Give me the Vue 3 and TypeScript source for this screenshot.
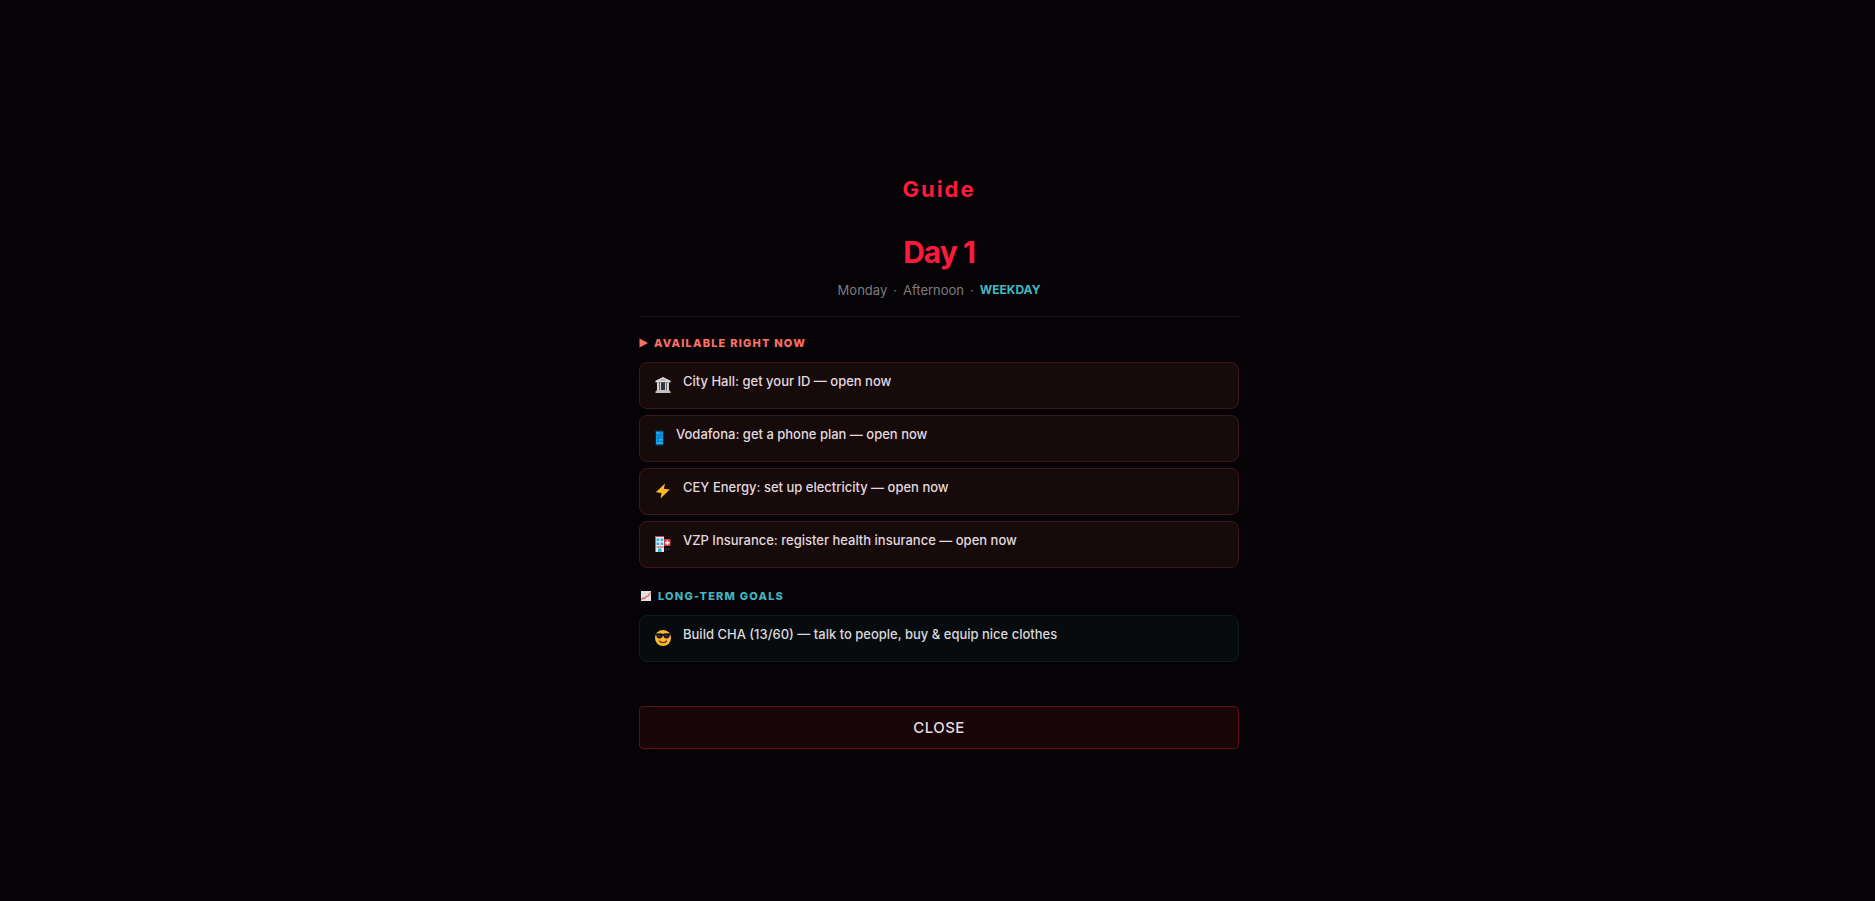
<script setup lang="ts">
import { ref } from 'vue'

type IconName = 'hall' | 'phone' | 'bolt' | 'hospital' | 'shades'

interface Task {
  icon: IconName
  text: string
}

const open = ref(true)

const available: Task[] = [
  { icon: 'hall', text: 'City Hall: get your ID — open now' },
  { icon: 'phone', text: 'Vodafona: get a phone plan — open now' },
  { icon: 'bolt', text: 'CEY Energy: set up electricity — open now' },
  { icon: 'hospital', text: 'VZP Insurance: register health insurance — open now' },
]

const goals: Task[] = [
  { icon: 'shades', text: 'Build CHA (13/60) — talk to people, buy & equip nice clothes' },
]

const groups = [
  { id: 'now', title: 'Available right now', tasks: available },
  { id: 'goals', title: 'Long-term goals', tasks: goals },
]
</script>

<template>
  <main class="page">
    <section v-if="open" class="guide">
      <h1 class="title">Guide</h1>
      <header class="day">
        <h2 class="day-name">Day 1</h2>
        <p class="meta">
          <span>Monday</span><span>·</span><span>Afternoon</span><span>·</span><strong>WEEKDAY</strong>
        </p>
      </header>

      <section v-for="group in groups" :key="group.id" class="group" :class="group.id">
        <h3 class="group-title">
          <svg v-if="group.id === 'now'" class="mark" viewBox="0 0 9 10" width="9" height="10" aria-hidden="true">
            <path d="M.5.5 9 5 .5 9.5z" fill="currentColor" />
          </svg>
          <svg v-else class="mark chart" viewBox="0 0 10 10" width="10" height="10" aria-hidden="true">
            <rect width="10" height="10" fill="#e8e6e8" />
            <path d="M2.5 0v10M5 0v10M7.5 0v10M0 2.5h10M0 5h10M0 7.5h10" stroke="#c9d3d6" stroke-width=".4" />
            <path d="M.3 9 2.3 6.800 3.700 7.600 5.600 5 7 5.200 9.700 1.300" fill="none" stroke="#f0524a" stroke-width="1.100" />
          </svg>
          {{ group.title }}
        </h3>
        <ul class="tasks">
          <li v-for="task in group.tasks" :key="task.text" class="task">
            <span class="icon" :class="task.icon">
              <svg v-if="task.icon === 'hall'" viewBox="0 0 16 16" width="16" height="16" aria-hidden="true">
                <path d="M8 0 15.500 3.800V5.500H.5V3.800z" fill="#dedcdd" />
                <path d="M2 5.500h12V13H2z" fill="#6a6668" />
                <path d="M5 5.500h6V13H5z" fill="#37333a" />
                <path d="M2 5.500h2V13H2zM5 5.500h1V13H5zM10 5.500h1V13h-1zM12 5.500h2V13h-2z" fill="#d4d1d2" />
                <path d="M1.500 13h13v1.200h-13zM.5 14.200h15V16H.5z" fill="#c4c1c3" />
                <path d="M3.500 3.800 8 1.600l4.500 2.200z" fill="#b4b0b3" />
              </svg>
              <svg v-else-if="task.icon === 'phone'" viewBox="0 0 9 16" width="9" height="16" aria-hidden="true">
                <rect width="9" height="16" rx="1" fill="#1b2229" />
                <rect x="1" y="1.500" width="7" height="13" fill="#0aa0f4" />
                <path d="M1 5h7M1 8h7M1 11.500h7M3.300 5v6.500M5.700 1.500V8" stroke="#07609f" stroke-width=".5" />
                <path d="M1.500 3h3M4 9.700h3M2 13h5" stroke="#25b9ff" />
              </svg>
              <svg v-else-if="task.icon === 'bolt'" viewBox="0 0 16 16" width="16" height="16" aria-hidden="true">
                <path d="M10 .5.8 9.300l5.700.6-1 5.600 9.200-9-5.800-.7z" fill="#fcb92c" />
              </svg>
              <svg v-else-if="task.icon === 'hospital'" viewBox="0 0 16 16" width="16" height="16" aria-hidden="true">
                <rect x="9" y="3.500" width="6.500" height="12.500" fill="#050306" />
                <rect x="9" y="3" width="6.500" height="7" fill="#dc3c46" />
                <path d="M12.400 4.500v4.500M10.200 6.700h4.500" stroke="#fff" stroke-width="1.500" />
                <rect x=".5" y="0" width="8.500" height="16" fill="#e3edf1" />
                <path d="M.5 0H9v1H.5zM1.500 10.500h7v1h-7z" fill="#df3947" />
                <path d="M1.500 2.500h2.700V5H1.500zM5.500 2.500h2.700V5H5.500zM1.500 6.500h2.700V9H1.500zM5.500 6.500h2.700V9H5.500zM3 12.500h3.500V16H3z" fill="#33b6e4" />
                <path d="M10 12h1.500v3H10zM13 12h1.500v3H13z" fill="#3d3034" />
              </svg>
              <svg v-else viewBox="0 0 16 16" width="16" height="16" aria-hidden="true">
                <circle cx="8" cy="8" r="8" fill="#fdb62f" />
                <path d="M.3 5 1.200 3.500 6 3.200 8 4l2-.8 4.800.3.900 1.500-1.200.6c0 2-1.100 3-2.900 3-2 0-2.900-1.100-3.200-2.800h-.8C7.300 7.500 6.400 8.600 4.400 8.600c-1.800 0-2.900-1-2.900-3z" fill="#15131a" />
                <path d="m3 4.700 2 2M10 4.700l2 2" stroke="#777" stroke-width=".8" />
                <path d="M4.500 11c1.800 2.200 5.200 2.200 7 0" fill="none" stroke="#65401d" stroke-width="1.200" stroke-linecap="round" />
              </svg>
            </span>
            <span>{{ task.text }}</span>
          </li>
        </ul>
      </section>

      <button class="close" type="button" @click="open = false">CLOSE</button>
    </section>
  </main>
</template>

<style>
body {
  margin: 0;
  background: #050306;
}
</style>

<style scoped>
.page {
  box-sizing: border-box;
  min-height: 100vh;
  display: flex;
  align-items: center;
  justify-content: center;
  padding: 22px 24px 0 27px;
  background: #050306;
  color: #e2d9df;
  font-family: Inter, "Liberation Sans", sans-serif;
}

.guide {
  width: 100%;
  max-width: 600px;
}

.title {
  margin: 0 0 30px;
  color: #ff1a3c;
  font-size: 22px;
  font-weight: 700;
  line-height: 30px;
  letter-spacing: 2px;
  text-align: center;
}

.day {
  padding-bottom: 16px;
  border-bottom: 1px solid #151317;
  text-align: center;
}

.day-name {
  margin: 0 0 10px;
  color: #ff1a3c;
  font-size: 30px;
  font-weight: 700;
  line-height: 36px;
  letter-spacing: -1px;
}

.meta {
  display: flex;
  justify-content: center;
  gap: 6px;
  margin: 0;
  color: #7d7a7d;
  font-size: 13px;
  line-height: 20px;
}

.meta strong {
  color: #45b7c0;
  font-size: 12px;
  font-weight: 700;
}

.group {
  margin-top: 19px;
}

.group + .group {
  margin-top: 21px;
}

.group-title {
  display: flex;
  align-items: center;
  gap: 6px;
  margin: 0 0 12px;
  font-size: 11px;
  font-weight: 800;
  line-height: 14px;
  letter-spacing: 0.11em;
  text-transform: uppercase;
}

.now .group-title {
  color: #ff6f66;
}

.goals .group-title {
  color: #43b4be;
}

.chart {
  padding: 0 1px 0 2px;
}

.tasks {
  display: flex;
  flex-direction: column;
  gap: 6px;
  margin: 0;
  padding: 0;
  list-style: none;
}

.task {
  box-sizing: border-box;
  display: flex;
  gap: 10px;
  min-height: 47px;
  padding: 9px 15px;
  border: 1px solid #3b171b;
  border-radius: 8px;
  background: #160a0b;
  font-size: 13px;
  font-weight: 500;
  line-height: 18px;
}

.goals .task {
  border-color: #0d1b20;
  background: #080b0e;
  color: #d9d9dc;
}

.icon {
  display: flex;
  width: 18px;
  padding-top: 5px;
}

.icon.phone {
  width: 11px;
}

.close {
  display: block;
  width: 100%;
  margin-top: 44px;
  padding: 11px 16px;
  border: 1px solid #600c19;
  border-radius: 4px;
  background: #180509;
  color: #e5dce0;
  font: 500 15px/19px Inter, "Liberation Sans", sans-serif;
  letter-spacing: 0.03em;
  cursor: pointer;
}
</style>
